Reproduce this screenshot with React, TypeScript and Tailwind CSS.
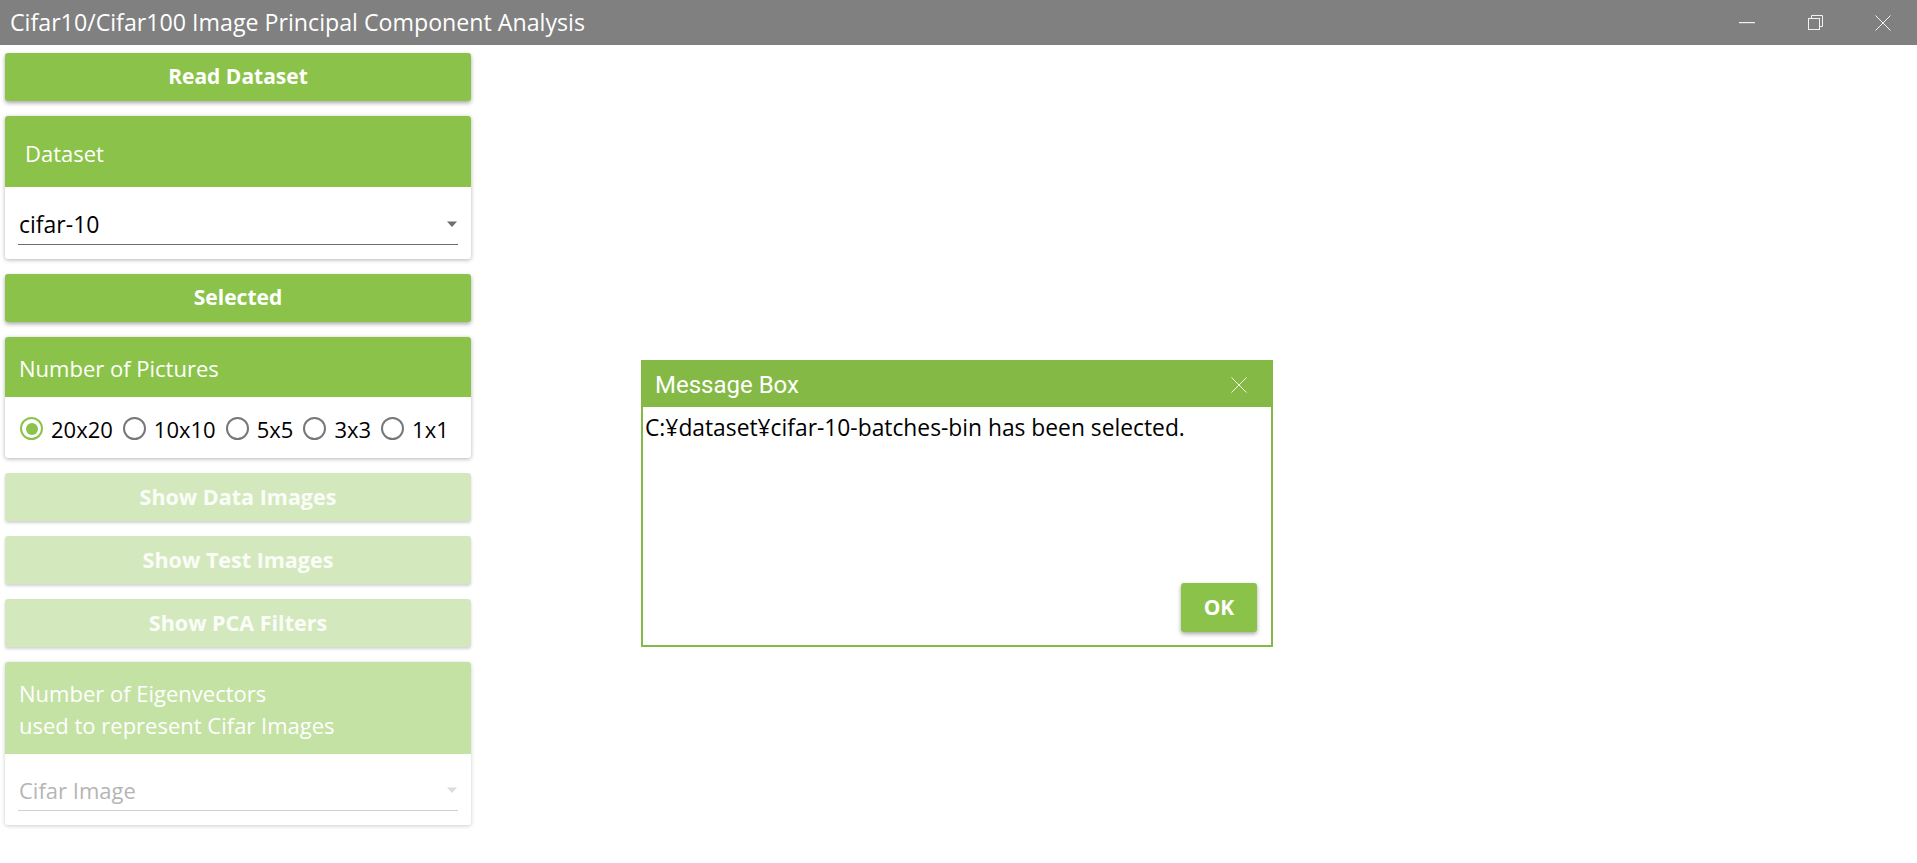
import React from "react";

const ui = { fontFamily: '"Open Sans", "Noto Sans", sans-serif' };
const roboto = { fontFamily: 'Roboto, "Open Sans", sans-serif' };

function ActionButton({ label, disabled = false }: { label: string; disabled?: boolean }) {
  return (
    <button
      className={
        disabled
          ? "flex h-12 w-full items-center justify-center rounded-[3px] bg-[#d4e8bd] text-[21.5px] font-bold text-white/90 shadow-[0_2px_3px_rgba(0,0,0,0.18)]"
          : "flex h-12 w-full items-center justify-center rounded-[3px] bg-[#8bc34a] text-[21px] font-bold text-white shadow-[0_2px_4px_rgba(0,0,0,0.35)]"
      }
    >
      {label}
    </button>
  );
}

function Caret({ light = false }: { light?: boolean }) {
  return (
    <svg width="12" height="7" viewBox="0 0 12 7" className="shrink-0">
      <path d="M1 0.5 L11 0.5 L6 6 Z" fill={light ? "#dcdcdc" : "#6e6e6e"} />
    </svg>
  );
}

function Radio({ label, checked = false }: { label: string; checked?: boolean }) {
  return (
    <label className="flex items-center gap-[8px]">
      <span
        className={
          checked
            ? "grid h-[23px] w-[23px] place-items-center rounded-full border-[2.5px] border-[#8bc34a]"
            : "grid h-[23px] w-[23px] place-items-center rounded-full border-[2.5px] border-[#777777]"
        }
      >
        {checked && <span className="h-[12px] w-[12px] rounded-full bg-[#8bc34a]" />}
      </span>
      <span className="text-[22px] leading-[30px] text-black">{label}</span>
    </label>
  );
}

function TitleBar() {
  return (
    <div className="flex h-[45px] items-center bg-[#808080] text-white">
      <span className="pl-[10px] text-[23.2px]">
        Cifar10/Cifar100 Image Principal Component Analysis
      </span>
      <div className="ml-auto flex h-full items-center">
        <span className="grid h-full w-[68px] place-items-center">
          <svg width="16" height="2" viewBox="0 0 16 2">
            <rect width="16" height="1.2" fill="#f2f2f2" />
          </svg>
        </span>
        <span className="grid h-full w-[68px] place-items-center">
          <svg width="15" height="15" viewBox="0 0 15 15" fill="none" stroke="#f2f2f2" strokeWidth="1">
            <rect x="0.5" y="3.5" width="11" height="11" />
            <path d="M3.5 3.5 V0.5 H14.5 V11.5 H11.5" />
          </svg>
        </span>
        <span className="grid h-full w-[68px] place-items-center">
          <svg width="16" height="16" viewBox="0 0 16 16" stroke="#f2f2f2" strokeWidth="1">
            <path d="M0.5 0.5 L15.5 15.5 M15.5 0.5 L0.5 15.5" />
          </svg>
        </span>
      </div>
    </div>
  );
}

export default function App() {
  return (
    <div className="relative h-[863px] w-full overflow-hidden bg-white" style={ui}>
      <TitleBar />

      <div className="flex w-[471px] flex-col gap-[15px] pl-[5px] pt-[8px]">
        <ActionButton label="Read Dataset" />

        <div className="overflow-hidden rounded-[3px] bg-white shadow-[0_1px_4px_rgba(0,0,0,0.3)]">
          <div className="flex h-[71px] items-center bg-[#8bc34a] px-[20px] pt-[4px] text-[22px] text-white">Dataset</div>
          <div className="h-[72px] px-[13px] pt-[22px]">
            <div className="flex items-center justify-between border-b-[1.5px] border-[#6f6f6f] pb-[5px]">
              <span className="pl-[1px] text-[23px] leading-[30px] text-black">cifar-10</span>
              <Caret />
            </div>
          </div>
        </div>

        <ActionButton label="Selected" />

        <div className="overflow-hidden rounded-[3px] bg-white shadow-[0_1px_4px_rgba(0,0,0,0.3)]">
          <div className="flex h-[60px] items-center bg-[#8bc34a] px-[14px] pt-[3px] text-[22px] text-white">
            Number of Pictures
          </div>
          <div className="flex h-[61px] items-center gap-[10px] px-[15px] pt-[2px]">
            <Radio label="20x20" checked />
            <Radio label="10x10" />
            <Radio label="5x5" />
            <Radio label="3x3" />
            <Radio label="1x1" />
          </div>
        </div>

        <ActionButton label="Show Data Images" disabled />
        <ActionButton label="Show Test Images" disabled />
        <ActionButton label="Show PCA Filters" disabled />

        <div className="overflow-hidden rounded-[3px] bg-white shadow-[0_1px_4px_rgba(0,0,0,0.2)]">
          <div className="flex h-[92px] flex-col justify-center bg-[#c5e2a5] px-[14px] pt-[2px] text-[22px] leading-[32px] text-white">
            <span>Number of Eigenvectors</span>
            <span>used to represent Cifar Images</span>
          </div>
          <div className="h-[71px] px-[13px] pt-[21px]">
            <div className="flex items-center justify-between border-b-[1.5px] border-[#d0d0d0] pb-[5px]">
              <span className="pl-[1px] text-[22px] leading-[30px] text-[#b5b5b5]">Cifar Image</span>
              <Caret light />
            </div>
          </div>
        </div>
      </div>

      <div className="absolute left-[641px] top-[360px] flex h-[287px] w-[632px] flex-col border-2 border-[#84b946] bg-white">
        <div className="flex h-[45px] items-center justify-between bg-[#84b946] pl-[12px] pr-[24px] text-white" style={roboto}>
          <span className="text-[24px]">Message Box</span>
          <svg width="16" height="16" viewBox="0 0 16 16" stroke="#ffffff" strokeWidth="1" opacity="0.9">
            <path d="M0.5 0.5 L15.5 15.5 M15.5 0.5 L0.5 15.5" />
          </svg>
        </div>
        <div className="flex-1 pl-[2px] pt-[5px] text-[22.8px] leading-[31px] text-black">
          C:¥dataset¥cifar-10-batches-bin has been selected.
        </div>
        <div className="flex justify-end pr-[14px] pb-[13px]">
          <button className="h-[49px] w-[76px] rounded-[3px] bg-[#8bc34a] text-[21px] font-bold text-white shadow-[0_2px_4px_rgba(0,0,0,0.35)]">
            OK
          </button>
        </div>
      </div>
    </div>
  );
}
